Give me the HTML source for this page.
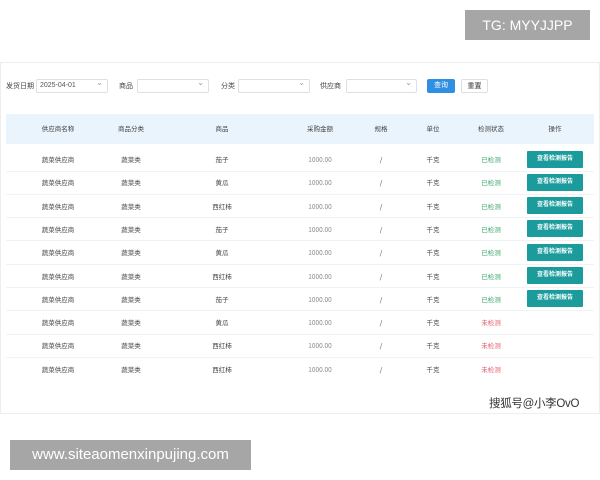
<!DOCTYPE html>
<html><head><meta charset="utf-8"><style>
*{margin:0;padding:0;box-sizing:border-box}
body{width:600px;height:480px;background:#fff;position:relative;overflow:hidden;font-family:"Liberation Sans","Noto Sans CJK SC",sans-serif;color:#333}
.abs{position:absolute}
.card{left:0;top:62px;width:600px;height:352px;border:1px solid #eceff2;background:#fff}
.lbl{font-size:7px;top:81px;color:#444}
.sel{top:79px;height:14px;border:1px solid #dcdfe6;border-radius:2px;font-size:7px;line-height:12px;padding-left:3px;color:#555}
.sel:after{content:"⌄";position:absolute;right:4px;top:-3px;font-size:8px;color:#999}
.btn{top:79px;height:14px;font-size:7px;line-height:14px;text-align:center;border-radius:2px}
.hdr{left:6px;top:114px;width:588px;height:30px;background:#eaf4fc}
.t{position:absolute;font-size:6.5px;height:12px;line-height:12px;display:flex;align-items:center;transform:translateX(-50%);white-space:nowrap;color:#444;font-family:"Noto Sans CJK SC","Liberation Sans",sans-serif}
.line{position:absolute;left:6px;width:588px;height:1px;background:#f0f2f4}
.vb{position:absolute;left:527px;width:56px;height:17px;background:#1b9b9b;color:#fff;font-size:6px;line-height:17px;text-align:center;border-radius:1px;font-weight:bold}
</style></head><body>
<div class="abs" style="left:465px;top:10px;width:125px;height:30px;background:#a6a6a6;color:#fff;font-size:14px;line-height:30px;text-align:center">TG: MYYJJPP</div>
<div class="abs card"></div>
<div class="abs lbl" style="left:6px">发货日期</div>
<div class="abs sel" style="left:36px;width:72px">2025-04-01</div>
<div class="abs lbl" style="left:119px">商品</div>
<div class="abs sel" style="left:137px;width:72px"></div>
<div class="abs lbl" style="left:221px">分类</div>
<div class="abs sel" style="left:238px;width:72px"></div>
<div class="abs lbl" style="left:320px">供应商</div>
<div class="abs sel" style="left:346px;width:71px"></div>
<div class="abs btn" style="left:427px;width:28px;background:#2f8fe0;color:#fff">查询</div>
<div class="abs btn" style="left:461px;width:27px;border:1px solid #dcdfe6;color:#333">重置</div>
<div class="abs hdr"></div>
<div id="tb"></div>
<div class="abs" style="left:489px;top:395px;font-size:11.5px;color:#333;letter-spacing:-0.3px">搜狐号@小李OvO</div>
<div class="abs" style="left:10px;top:440px;width:241px;height:30px;background:#a6a6a6;color:#fff;font-size:15px;line-height:30px;text-align:center">www.siteaomenxinpujing.com</div>
<script>
var cx=[58,131,222,320,381,433,491,555];
var h=["供应商名称","商品分类","商品","采购金额","规格","单位","检测状态","操作"];
var s='';
h.forEach(function(v,i){s+='<div class="t" style="left:'+cx[i]+'px;top:122px">'+v+'</div>';});
var g=["茄子","黄瓜","西红柿","茄子","黄瓜","西红柿","茄子","黄瓜","西红柿","西红柿"];
for(var r=0;r<10;r++){
 var y=159+r*23.3;
 var ok=r<7;
 var vals=["蔬菜供应商","蔬菜类",g[r],"1000.00","/","千克",ok?"已检测":"未检测"];
 vals.forEach(function(v,i){var c=i==6?(ok?'color:#3aa56a':'color:#e05a6a'):(i==3?'color:#888':'');s+='<div class="t" style="left:'+cx[i]+'px;top:'+(y-6)+'px;'+c+'">'+v+'</div>';});
 if(ok)s+='<div class="vb" style="top:'+(y-8.5)+'px">查看检测报告</div>';
 if(r<9)s+='<div class="line" style="top:'+(y+11.5)+'px"></div>';
}
document.getElementById('tb').innerHTML=s;
</script>
</body></html>
